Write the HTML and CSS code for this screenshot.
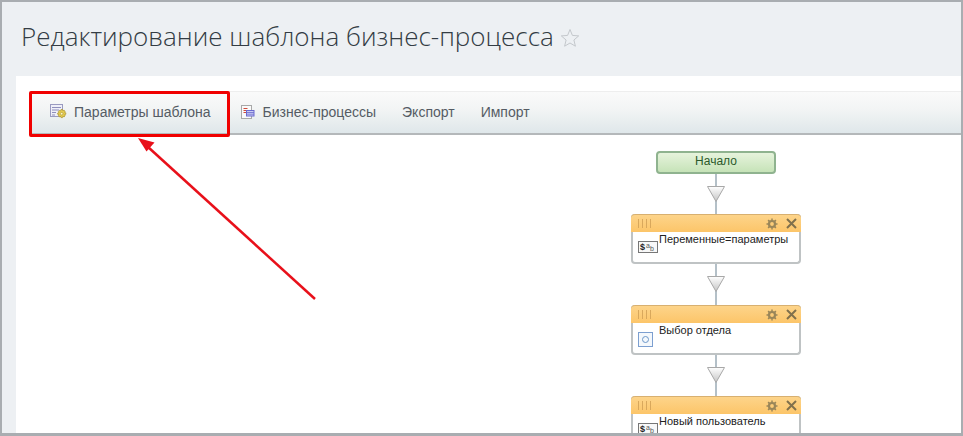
FILE: index.html
```html
<!DOCTYPE html>
<html lang="en">
<head>
  <meta charset="UTF-8">
  <title>Редактирование шаблона бизнес-процесса</title>
  <link rel="stylesheet" href="styles.css">
</head>
<body>
  <div class="frame">
    <div class="page-head">
      <h1>Редактирование шаблона бизнес-процесса</h1>
      <svg class="star" width="20" height="20" viewBox="0 0 20 20"><path d="M10 1.500l2.400 5.900 6.300.5-4.800 4.100 1.500 6.200L10 15l-5.400 3.200 1.500-6.200L1.300 7.900l6.300-.5z" fill="none" stroke="#c4c8cc" stroke-width="1"/></svg>
    </div>
    <div class="panel">
      <div class="toolbar">
        <a class="tool tool-first">
          <svg width="17" height="17" viewBox="0 0 17 17">
            <rect x=".5" y="1.500" width="12" height="12" fill="#efeff8" stroke="#9a9ac0"/>
            <path d="M2 4.500h9M2 7h7M2 9.500h4M2 12h3" stroke="#8f8fbc"/>
            <path d="M11 6.500h1.500l.4 1.200 1.200-.5 1 1-.5 1.200 1.200.4v1.500l-1.200.4.5 1.200-1 1-1.200-.5-.4 1.200H11l-.4-1.200-1.200.5-1-1 .5-1.200-1.200-.4V10l1.200-.4-.5-1.200 1-1 1.200.5z" fill="#e6cc50" stroke="#a8922e" stroke-width=".7"/>
            <circle cx="11.700" cy="10.700" r="1.300" fill="#fff8d0" stroke="#a8922e" stroke-width=".6"/>
          </svg>
          Параметры шаблона
        </a>
        <a class="tool">
          <svg width="16" height="16" viewBox="0 0 16 16">
            <rect x="1.500" y="1.500" width="10" height="13" fill="#fafafa" stroke="#a8a8a8"/>
            <path d="M3.500 4.500h4M3.500 6.500h2.500M3.500 8.500h2.500" stroke="#d04a3a"/>
            <rect x="6" y="6" width="8.500" height="6.500" fill="#6a6ad0"/>
            <path d="M7 7.500h6.500M7 9.300h6.500M7 11h6.500" stroke="#e4e4fa" stroke-width=".8"/>
          </svg>
          Бизнес-процессы
        </a>
        <a class="tool">Экспорт</a>
        <a class="tool">Импорт</a>
      </div>
      <div class="diagram">
        <div class="start-node">Начало</div>
        <div class="link">
          <svg width="20" height="40" viewBox="0 0 20 40">
            <path d="M10 0v40" stroke="#b4c0c8" stroke-width="2"/>
            <path d="M1.500 12.500h17L10 27.500z" fill="url(#arrowFill)" stroke="#a8a8a8"/>
            <defs><linearGradient id="arrowFill" x1="0" y1="0" x2="0" y2="1"><stop offset="0" stop-color="#fff"/><stop offset="1" stop-color="#c4c4c4"/></linearGradient></defs>
          </svg>
        </div>
        <div class="step">
          <div class="step-head">
            <span class="grip"></span>
            <svg class="gear" width="12" height="12" viewBox="0 0 12 12"><circle cx="6" cy="6" r="3" fill="none" stroke="#9a8659" stroke-width="2.200"/><path d="M6 .5v2.500M6 9v2.500M.5 6H3M9 6h2.500M2.100 2.100l1.800 1.800M8.100 8.100l1.800 1.800M2.100 9.900l1.800-1.800M8.100 3.900l1.800-1.800" stroke="#9a8659" stroke-width="1.500"/></svg>
            <svg class="close" width="11" height="11" viewBox="0 0 11 11"><path d="M1 1l9 9M10 1l-9 9" stroke="#80704c" stroke-width="2"/></svg>
          </div>
          <div class="step-body">
            <span class="badge badge-var"><b>$</b><i>a</i><i class="low">b</i></span>
            <span class="step-name">Переменные=параметры</span>
          </div>
        </div>
        <div class="link">
          <svg width="20" height="41" viewBox="0 0 20 41">
            <path d="M10 0v41" stroke="#b4c0c8" stroke-width="2"/>
            <path d="M1.500 12.500h17L10 27.500z" fill="url(#arrowFill)" stroke="#a8a8a8"/>
          </svg>
        </div>
        <div class="step">
          <div class="step-head">
            <span class="grip"></span>
            <svg class="gear" width="12" height="12" viewBox="0 0 12 12"><circle cx="6" cy="6" r="3" fill="none" stroke="#9a8659" stroke-width="2.200"/><path d="M6 .5v2.500M6 9v2.500M.5 6H3M9 6h2.500M2.100 2.100l1.800 1.800M8.100 8.100l1.800 1.800M2.100 9.900l1.800-1.800M8.100 3.900l1.800-1.800" stroke="#9a8659" stroke-width="1.500"/></svg>
            <svg class="close" width="11" height="11" viewBox="0 0 11 11"><path d="M1 1l9 9M10 1l-9 9" stroke="#80704c" stroke-width="2"/></svg>
          </div>
          <div class="step-body">
            <span class="badge badge-choice"><span class="dot"></span></span>
            <span class="step-name">Выбор отдела</span>
          </div>
        </div>
        <div class="link">
          <svg width="20" height="41" viewBox="0 0 20 41">
            <path d="M10 0v41" stroke="#b4c0c8" stroke-width="2"/>
            <path d="M1.500 12.500h17L10 27.500z" fill="url(#arrowFill)" stroke="#a8a8a8"/>
          </svg>
        </div>
        <div class="step">
          <div class="step-head">
            <span class="grip"></span>
            <svg class="gear" width="12" height="12" viewBox="0 0 12 12"><circle cx="6" cy="6" r="3" fill="none" stroke="#9a8659" stroke-width="2.200"/><path d="M6 .5v2.500M6 9v2.500M.5 6H3M9 6h2.500M2.100 2.100l1.800 1.800M8.100 8.100l1.800 1.800M2.100 9.900l1.800-1.800M8.100 3.900l1.800-1.800" stroke="#9a8659" stroke-width="1.500"/></svg>
            <svg class="close" width="11" height="11" viewBox="0 0 11 11"><path d="M1 1l9 9M10 1l-9 9" stroke="#80704c" stroke-width="2"/></svg>
          </div>
          <div class="step-body">
            <span class="badge badge-var"><b>$</b><i>a</i><i class="low">b</i></span>
            <span class="step-name">Новый пользователь</span>
          </div>
        </div>
      </div>
    </div>
  </div>
  <!-- red annotation over the screenshot -->
  <div class="mark-box"></div>
  <svg class="mark-arrow" width="963" height="436" viewBox="0 0 963 436">
    <path d="M315 299L148 147" stroke="#e8101a" stroke-width="2.500" fill="none"/>
    <path d="M138 138l16.500 4.500-8 9z" fill="#e8101a"/>
  </svg>
</body>
</html>
```

FILE: styles.css
```css
html, body {
  margin: 0;
  padding: 0;
  height: 436px;
  overflow: hidden;
  background: #fff;
}
body {
  font-family: "Liberation Sans", Arial, sans-serif;
  position: relative;
}
.frame {
  box-sizing: border-box;
  height: 436px;
  border: 2px solid #a9adb1;
  border-bottom-width: 3px;
  background: #edf0f3;
  display: flex;
  flex-direction: column;
  overflow: hidden;
}
.page-head {
  height: 74px;
  flex: none;
  display: flex;
  align-items: flex-start;
  padding-left: 19px;
  box-sizing: border-box;
}
.page-head h1 {
  margin: 15px 0 0;
  font-family: "Open Sans", sans-serif;
  font-weight: 300;
  font-size: 26px;
  line-height: 38px;
  color: #333c44;
  white-space: nowrap;
}
.star {
  margin: 26px 0 0 6px;
}
.panel {
  flex: 1;
  min-height: 0;
  margin-left: 14px;
  background: #fff;
  padding-top: 15px;
  display: flex;
  flex-direction: column;
}
/* Toolbar */
.toolbar {
  flex: none;
  height: 41px;
  margin-left: 14px;
  display: flex;
  align-items: center;
  background: linear-gradient(#fafafa, #f3f5f5 40%, #dfe7ea);
  border-top: 1px solid #eeeeee;
  border-bottom: 2px solid #b4b8ba;
  padding-left: 20px;
  gap: 26px;
}
.tool {
  display: flex;
  align-items: center;
  gap: 7px;
  padding-bottom: 2px;
  font-size: 14px;
  color: #555c64;
  white-space: nowrap;
}
.tool-first {
  margin-right: 3px;
}
/* Diagram */
.diagram {
  flex: 1;
  min-height: 0;
  overflow: hidden;
  display: flex;
  flex-direction: column;
  align-items: center;
  padding: 16px 0 0 455px;
}
.start-node {
  flex: none;
  box-sizing: border-box;
  width: 120px;
  height: 23px;
  border: 2px solid #8fb38f;
  border-radius: 4px;
  background: linear-gradient(#e6f3dc, #c6e3b8);
  color: #2c5a2c;
  font-size: 12px;
  line-height: 16px;
  text-align: center;
}
.link {
  flex: none;
}
.link svg {
  display: block;
}
.step {
  flex: none;
  box-sizing: border-box;
  width: 170px;
  height: 50px;
  border: 2px solid #bfc3c4;
  border-top: 0;
  border-radius: 4px;
  background: #fff;
}
.step-head {
  height: 17px;
  margin: 0 -2px;
  border-radius: 4px 4px 0 0;
  background: linear-gradient(#fdd48a, #fcc569);
  border-top: 1px solid #d8b070;
  display: flex;
  align-items: center;
  padding: 0 4px 0 7px;
}
.grip {
  width: 13px;
  height: 9px;
  background: repeating-linear-gradient(90deg, #d9a85c 0 1px, transparent 1px 4px);
}
.gear {
  margin-left: auto;
}
.close {
  margin-left: 8px;
}
.step-body {
  position: relative;
  height: 30px;
}
.step-name {
  position: absolute;
  left: 26px;
  top: 0;
  font-size: 11px;
  line-height: 14px;
  color: #222;
  white-space: nowrap;
}
.badge {
  position: absolute;
  box-sizing: border-box;
}
.badge-var {
  left: 5px;
  top: 9px;
  width: 20px;
  height: 12px;
  border: 1px solid #777;
  background: #f8f8f8;
  font-size: 9px;
  line-height: 10px;
  color: #222;
  display: flex;
  padding-left: 1px;
}
.badge-var i {
  font-style: normal;
  font-size: 7px;
  line-height: 7px;
  color: #555;
  margin-left: 1px;
}
.badge-var .low {
  margin-top: 3px;
  margin-left: 0;
}
.badge-choice {
  left: 5px;
  top: 9px;
  width: 15px;
  height: 15px;
  border: 1px solid #7c9fd0;
  background: #f4f8fc;
  display: flex;
  align-items: center;
  justify-content: center;
}
.dot {
  width: 5px;
  height: 5px;
  border: 1px solid #6a96c8;
  border-radius: 50%;
}
/* Annotation */
.mark-box {
  position: absolute;
  left: 29px;
  top: 91px;
  width: 201px;
  height: 46px;
  box-sizing: border-box;
  border: 3px solid #f00000;
  border-radius: 2px;
}
.mark-arrow {
  position: absolute;
  left: 0;
  top: 0;
}
```
